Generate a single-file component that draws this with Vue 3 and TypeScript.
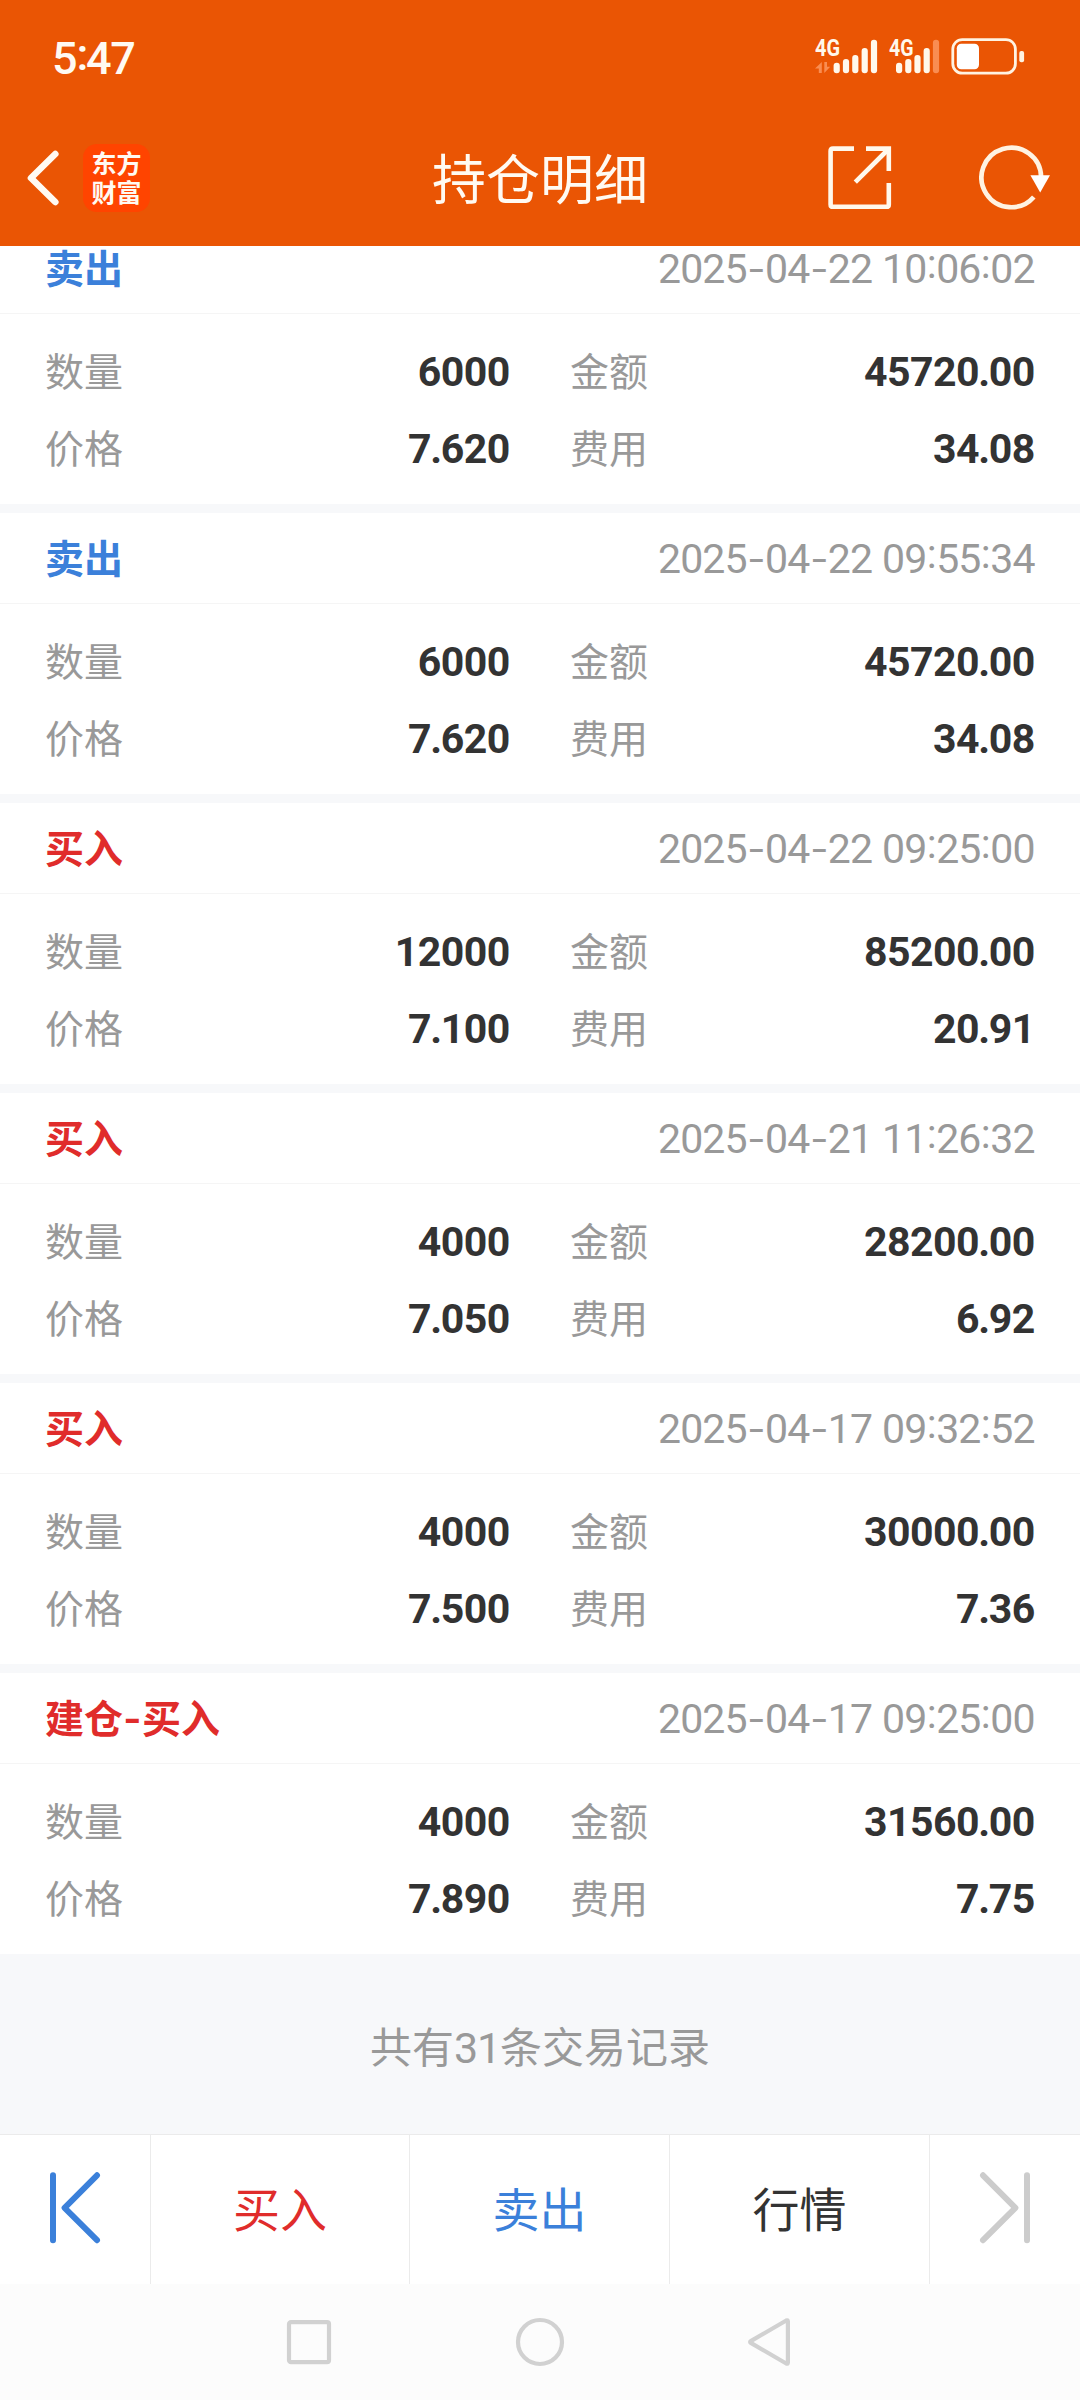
<script setup lang="ts">
interface Trade {
  side: 'buy' | 'sell'
  label: string
  date: string
  time: string
  quantity: string
  amount: string
  price: string
  fee: string
}

const trades: Trade[] = [
  { side: 'sell', label: '卖出', date: '2025-04-22', time: '10:06:02', quantity: '6000', amount: '45720.00', price: '7.620', fee: '34.08' },
  { side: 'sell', label: '卖出', date: '2025-04-22', time: '09:55:34', quantity: '6000', amount: '45720.00', price: '7.620', fee: '34.08' },
  { side: 'buy', label: '买入', date: '2025-04-22', time: '09:25:00', quantity: '12000', amount: '85200.00', price: '7.100', fee: '20.91' },
  { side: 'buy', label: '买入', date: '2025-04-21', time: '11:26:32', quantity: '4000', amount: '28200.00', price: '7.050', fee: '6.92' },
  { side: 'buy', label: '买入', date: '2025-04-17', time: '09:32:52', quantity: '4000', amount: '30000.00', price: '7.500', fee: '7.36' },
  { side: 'buy', label: '建仓-买入', date: '2025-04-17', time: '09:25:00', quantity: '4000', amount: '31560.00', price: '7.890', fee: '7.75' },
]

const total = 31

function charClass(ch: string): string {
  if (ch === '-') return 'hyphen'
  if (ch === ':') return 'colon'
  if (ch === '.') return 'dot'
  if (ch === ' ') return 'space'
  return 'digit'
}

const chars = (t: Trade): string[] => [...`${t.date} ${t.time}`]

const fields = (t: Trade) => [
  { name: '数量', value: t.quantity },
  { name: '金额', value: t.amount },
  { name: '价格', value: t.price },
  { name: '费用', value: t.fee },
]
</script>

<template>
  <div class="screen">
    <header class="top">
      <div class="status">
        <div class="clock">5<span class="clock-colon">:</span>47</div>
        <svg class="status-icons" width="210" height="40" viewBox="815 36 210 40">
          <g fill="#fff8ec">
            <text x="815" y="56" class="net" textLength="25" lengthAdjust="spacingAndGlyphs">4G</text>
            <rect x="833.6" y="62.7" width="6.2" height="10.6" rx="3" />
            <rect x="842.9" y="59" width="6.2" height="14.3" rx="3" />
            <rect x="852.2" y="55" width="6.2" height="18.3" rx="3" />
            <rect x="861.6" y="48" width="6.2" height="25.3" rx="3" />
            <rect x="870.9" y="39.7" width="6.2" height="33.6" rx="3" />
            <text x="889" y="56" class="net" textLength="24.5" lengthAdjust="spacingAndGlyphs">4G</text>
            <rect x="896" y="62.7" width="6.2" height="10.6" rx="3" />
            <rect x="905.2" y="59" width="6.2" height="14.3" rx="3" />
            <rect x="914.4" y="55" width="6.2" height="18.3" rx="3" />
            <rect x="923.6" y="48" width="6.2" height="25.3" rx="3" />
          </g>
          <rect x="932.9" y="39.7" width="6.2" height="33.6" rx="3" fill="#f98d52" />
          <path d="M818.8 73V68.6H815L821.8 62V73ZM824.3 62V73L830.2 66.8H827V62Z" fill="#f98d52" />
          <rect x="952.8" y="39.6" width="62.6" height="33.6" rx="9.5" fill="none" stroke="#fff3e2" stroke-width="2.8" />
          <rect x="956.8" y="43.7" width="22.2" height="25.6" rx="4.5" fill="#fff" />
          <rect x="1019.3" y="51" width="4.8" height="11.2" rx="2" fill="#fff3e2" />
        </svg>
      </div>
      <div class="bar">
        <div class="bar-left">
          <svg width="36" height="60" viewBox="0 0 36 60">
            <path d="M29.3 6L5 30L29.3 54" fill="none" stroke="#fffaf2" stroke-width="6.6" stroke-linecap="round" stroke-linejoin="round" />
          </svg>
          <div class="logo">东方<br />财富</div>
        </div>
        <h1 class="title">持仓明细</h1>
        <div class="bar-right">
          <svg width="64" height="64" viewBox="0 0 64 64" fill="none" stroke="#fff8ec" stroke-width="4.6">
            <path d="M26 2.6H5Q2.6 2.6 2.6 5V58.4Q2.6 60.8 5 60.8H58.4Q60.8 60.8 60.8 58.4V37" />
            <path d="M38 2.6H60.8V25" />
            <path d="M27.3 36.2L59.6 4" />
          </svg>
          <svg width="72" height="66" viewBox="0 0 72 66">
            <path d="M54.8 52A29.8 29.8 0 1 1 62.1 32" fill="none" stroke="#fff3e2" stroke-width="4.7" />
            <path d="M51.4 30.2H71L61.2 47.6Z" fill="#fff" />
          </svg>
        </div>
      </div>
    </header>

    <main class="list">
      <section v-for="(t, i) in trades" :key="i" class="trade">
        <div class="trade-head">
          <span :class="['side', t.side]"><span v-for="(c, k) in t.label" :key="k" :class="{ dash: c === '-' }">{{ c }}</span></span>
          <span class="stamp"><span v-for="(c, k) in chars(t)" :key="k" :class="charClass(c)">{{ c }}</span></span>
        </div>
        <div class="trade-body">
          <div v-for="f in fields(t)" :key="f.name" class="field">
            <span class="name">{{ f.name }}</span>
            <span class="value"><span v-for="(c, k) in f.value" :key="k" :class="charClass(c)">{{ c }}</span></span>
          </div>
        </div>
      </section>
    </main>

    <div class="summary"><span>共有<span class="count">{{ total }}</span>条交易记录</span></div>

    <nav class="tabs">
      <div class="tab edge">
        <svg width="52" height="72" viewBox="0 0 52 72" fill="none" stroke="#3b80da" stroke-width="6" stroke-linecap="round" stroke-linejoin="round">
          <path d="M4 3.3V68.2M48 3.3L15.6 35.8L48 68.2" />
        </svg>
      </div>
      <div class="tab buy">买入</div>
      <div class="tab sell">卖出</div>
      <div class="tab quote">行情</div>
      <div class="tab edge">
        <svg width="52" height="72" viewBox="0 0 52 72" fill="none" stroke="#ccc" stroke-width="6" stroke-linecap="round" stroke-linejoin="round">
          <path d="M48 3.3V68.2M4 3.3L36.4 35.8L4 68.2" />
        </svg>
      </div>
    </nav>

    <footer class="system">
      <svg width="50" height="50" viewBox="0 0 50 50"><rect x="5" y="5.2" width="40" height="40" rx="2" /></svg>
      <svg width="50" height="50" viewBox="0 0 50 50"><circle cx="25" cy="25" r="22" /></svg>
      <svg width="50" height="50" viewBox="0 0 50 50"><path d="M40.2 3.5Q41.9 2.7 41.9 4.6V45.4Q41.9 47.3 40.2 46.5L4.8 25.9Q3.4 25 4.8 24.1Z" /></svg>
    </footer>
  </div>
</template>

<style>
body {
  margin: 0;
  background: #fff;
}
</style>

<style scoped>
.screen {
  width: 1080px;
  height: 2400px;
  display: flex;
  flex-direction: column;
  overflow: hidden;
  background: #fff;
  font-family: Roboto, "Noto Sans CJK SC", sans-serif;
}

.top {
  height: 246px;
  flex: none;
  background: #ea5504;
  color: #fffaf2;
}

.status {
  height: 112px;
  box-sizing: border-box;
  padding: 0 55px 0 52px;
  display: flex;
  justify-content: space-between;
  align-items: center;
}

.clock {
  font-size: 45px;
  font-weight: 500;
  line-height: 54px;
  margin-top: 2px;
  letter-spacing: -1.2px;
}

.clock-colon {
  display: inline-block;
  width: 9.5px;
  text-align: center;
  vertical-align: 4px;
}

.net {
  font: 700 23px Roboto, sans-serif;
}

.bar {
  height: 132px;
  display: grid;
  grid-template-columns: 1fr 216px 1fr;
  align-items: center;
}

.bar-left {
  display: flex;
  align-items: center;
  padding-left: 26px;
  gap: 21px;
}

.logo {
  width: 67px;
  height: 68px;
  box-sizing: border-box;
  padding-top: 4px;
  border-radius: 14px;
  background: #ff4400;
  text-align: center;
  font: 700 25px/29px "Noto Sans CJK SC", sans-serif;
}

.title {
  margin: 0;
  padding-top: 8px;
  font-size: 54px;
  font-weight: 400;
  line-height: 80px;
  white-space: nowrap;
}

.bar-right {
  display: flex;
  align-items: center;
  justify-content: flex-end;
  gap: 87px;
  padding-right: 29px;
}

.list {
  height: 1708px;
  flex: none;
  overflow: hidden;
}

.trade {
  height: 281px;
  margin-bottom: 9px;
  background: #fff;
  box-shadow: 0 9px 0 #f7f8fa;
}

.trade:first-child {
  margin-top: -23px;
}

.trade-head {
  height: 91px;
  box-sizing: border-box;
  border-bottom: 1px solid #f5f5f5;
  padding: 0 45px;
  display: flex;
  align-items: center;
  justify-content: space-between;
  line-height: 60px;
}

.side {
  display: flex;
  padding-top: 3px;
  font-size: 39px;
  font-weight: 700;
}

.dash {
  width: 19px;
  display: flex;
  justify-content: center;
  transform: scaleX(1.2);
}

.buy {
  color: #e02c2b;
}

.sell {
  color: #3b80da;
}

.stamp {
  display: flex;
  font-size: 41px;
  color: #999;
  padding-top: 2px;
}

.digit {
  width: 22.15px;
  display: flex;
  justify-content: center;
}

.hyphen {
  width: 18.5px;
  display: flex;
  justify-content: center;
  transform: scaleX(1.3);
}

.colon {
  width: 9.8px;
  display: flex;
  justify-content: center;
  margin-top: -5px;
}

.space {
  width: 10px;
}

.trade-body {
  display: grid;
  grid-template-columns: 465px 465px;
  column-gap: 60px;
  grid-auto-rows: 77px;
  padding: 19px 45px 0;
}

.field {
  display: flex;
  align-items: center;
  justify-content: space-between;
  line-height: 60px;
}

.name {
  font-size: 39px;
  color: #999;
  padding-top: 2px;
}

.value {
  display: flex;
  font-size: 41px;
  font-weight: 700;
  color: #333;
}

.value .digit {
  width: 23px;
}

.dot {
  width: 9.8px;
  display: flex;
  justify-content: center;
}

.summary {
  height: 180px;
  flex: none;
  box-sizing: border-box;
  display: flex;
  align-items: center;
  justify-content: center;
  background: #f7f8fa;
  color: #999;
  font-size: 42px;
}

.count {
  font-size: 43px;
  letter-spacing: -1.2px;
}

.tabs {
  height: 150px;
  flex: none;
  box-sizing: border-box;
  border-top: 1px solid #ebebeb;
  display: grid;
  grid-template-columns: 151px 259px 260px 260px 150px;
}

.tab {
  display: flex;
  align-items: center;
  justify-content: center;
  border-right: 1px solid #ebebeb;
  padding-bottom: 6px;
  font-size: 47px;
}

.tab:last-child {
  border-right: 0;
}

.tab.edge {
  padding-bottom: 3px;
}

.quote {
  color: #333;
}

.system {
  flex: 1;
  display: flex;
  justify-content: center;
  align-items: center;
  gap: 181px;
  background: #fcfcfc;
}

.system svg {
  fill: none;
  stroke: #d1d1d1;
  stroke-width: 4.2;
}
</style>
